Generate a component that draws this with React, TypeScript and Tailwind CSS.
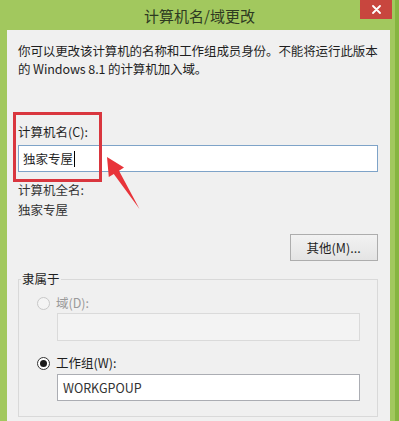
import React from "react";

const cjk = { fontFamily: '"Noto Sans CJK SC", "Noto Sans", sans-serif' };

function Radio({ checked, disabled }: { checked?: boolean; disabled?: boolean }) {
  return (
    <span
      className={[
        "flex h-[13px] w-[13px] shrink-0 items-center justify-center rounded-full border",
        disabled ? "border-[#c8c8c8] bg-[#f4f4f4]" : "border-[#333] bg-white",
      ].join(" ")}
    >
      {checked && <span className="h-[7px] w-[7px] rounded-full bg-[#1a1a1a]" />}
    </span>
  );
}

export default function App() {
  return (
    <div
      className="relative flex h-[421px] w-[399px] flex-col overflow-hidden border-r-4 border-[#86b541] bg-[#a2c85e] text-[#1f1f1f]"
      style={cjk}
    >
      {/* title bar */}
      <div className="relative flex h-[30px] shrink-0 items-center justify-center">
        <span className="pl-[4px] text-[15px] leading-none text-[#2e3a22]">计算机名/域更改</span>
        <button className="absolute right-[3px] top-0 flex h-[19px] w-[32px] items-center justify-center bg-[#c8463e]">
          <svg width="9" height="9" viewBox="0 0 9 9">
            <path d="M1 1 L8 8 M8 1 L1 8" stroke="#fff" strokeWidth="1.8" strokeLinecap="round" />
          </svg>
        </button>
      </div>

      <div className="flex flex-1 pl-[7px] pr-[6px]">
        <div className="relative flex flex-1 flex-col bg-[#f0f0f0] pl-[11px] pr-[12px] text-[12.5px] leading-[18px]">
          <p className="whitespace-nowrap pt-[12px] tracking-[-0.1px]">
            你可以更改该计算机的名称和工作组成员身份。不能将运行此版本
            <br />的 Windows 8.1 的计算机加入域。
          </p>

          <div className="mt-[45px]">计算机名(C):</div>
          <div className="mt-[4px] flex h-[27px] items-center border border-[#7ea3c8] bg-white pl-[4px]">
            独家专屋
            <span className="ml-px inline-block h-[16px] w-px bg-black" />
          </div>

          <div className="mt-[9px] text-[#333]">计算机全名:</div>
          <div className="mt-[2px] text-[#333]">独家专屋</div>

          <div className="mt-[15px] flex justify-end">
            <button className="flex h-[27px] w-[88px] items-center justify-center border border-[#adadad] bg-gradient-to-b from-[#f2f2f2] to-[#e4e4e4] text-[12.5px]">
              其他(M)...
            </button>
          </div>

          <fieldset className="mt-[9px] border border-[#d9d9d9] pb-[15px]">
            <legend className="ml-[2px] px-px">隶属于</legend>
            <div className="mt-[6px] flex items-center gap-[6px] pl-[18px] text-[#9a9a9a]">
              <Radio disabled />
              <span>域(D):</span>
            </div>
            <div className="ml-[38px] mt-px h-[28px] w-[303px] border border-[#dadada] bg-[#f3f3f3]" />

            <div className="mt-[13px] flex items-center gap-[6px] pl-[18px]">
              <Radio checked />
              <span>工作组(W):</span>
            </div>
            <div className="ml-[38px] mt-[2px] flex h-[27px] w-[303px] items-center border border-[#abadb3] bg-white pl-[5px] text-[#333]">
              WORKGPOUP
            </div>
          </fieldset>

          {/* annotation box */}
          <div className="pointer-events-none absolute left-[6px] top-[82px] h-[70px] w-[89px] border-[3px] border-[#d9363e]" />
        </div>
      </div>

      {/* annotation arrow */}
      <svg className="pointer-events-none absolute left-0 top-0" width="399" height="421">
        <polygon
          points="107,157 124,167.6 119,170.7 139.5,209 113.8,173.9 108.8,177"
          fill="#e8343a"
        />
      </svg>
    </div>
  );
}
